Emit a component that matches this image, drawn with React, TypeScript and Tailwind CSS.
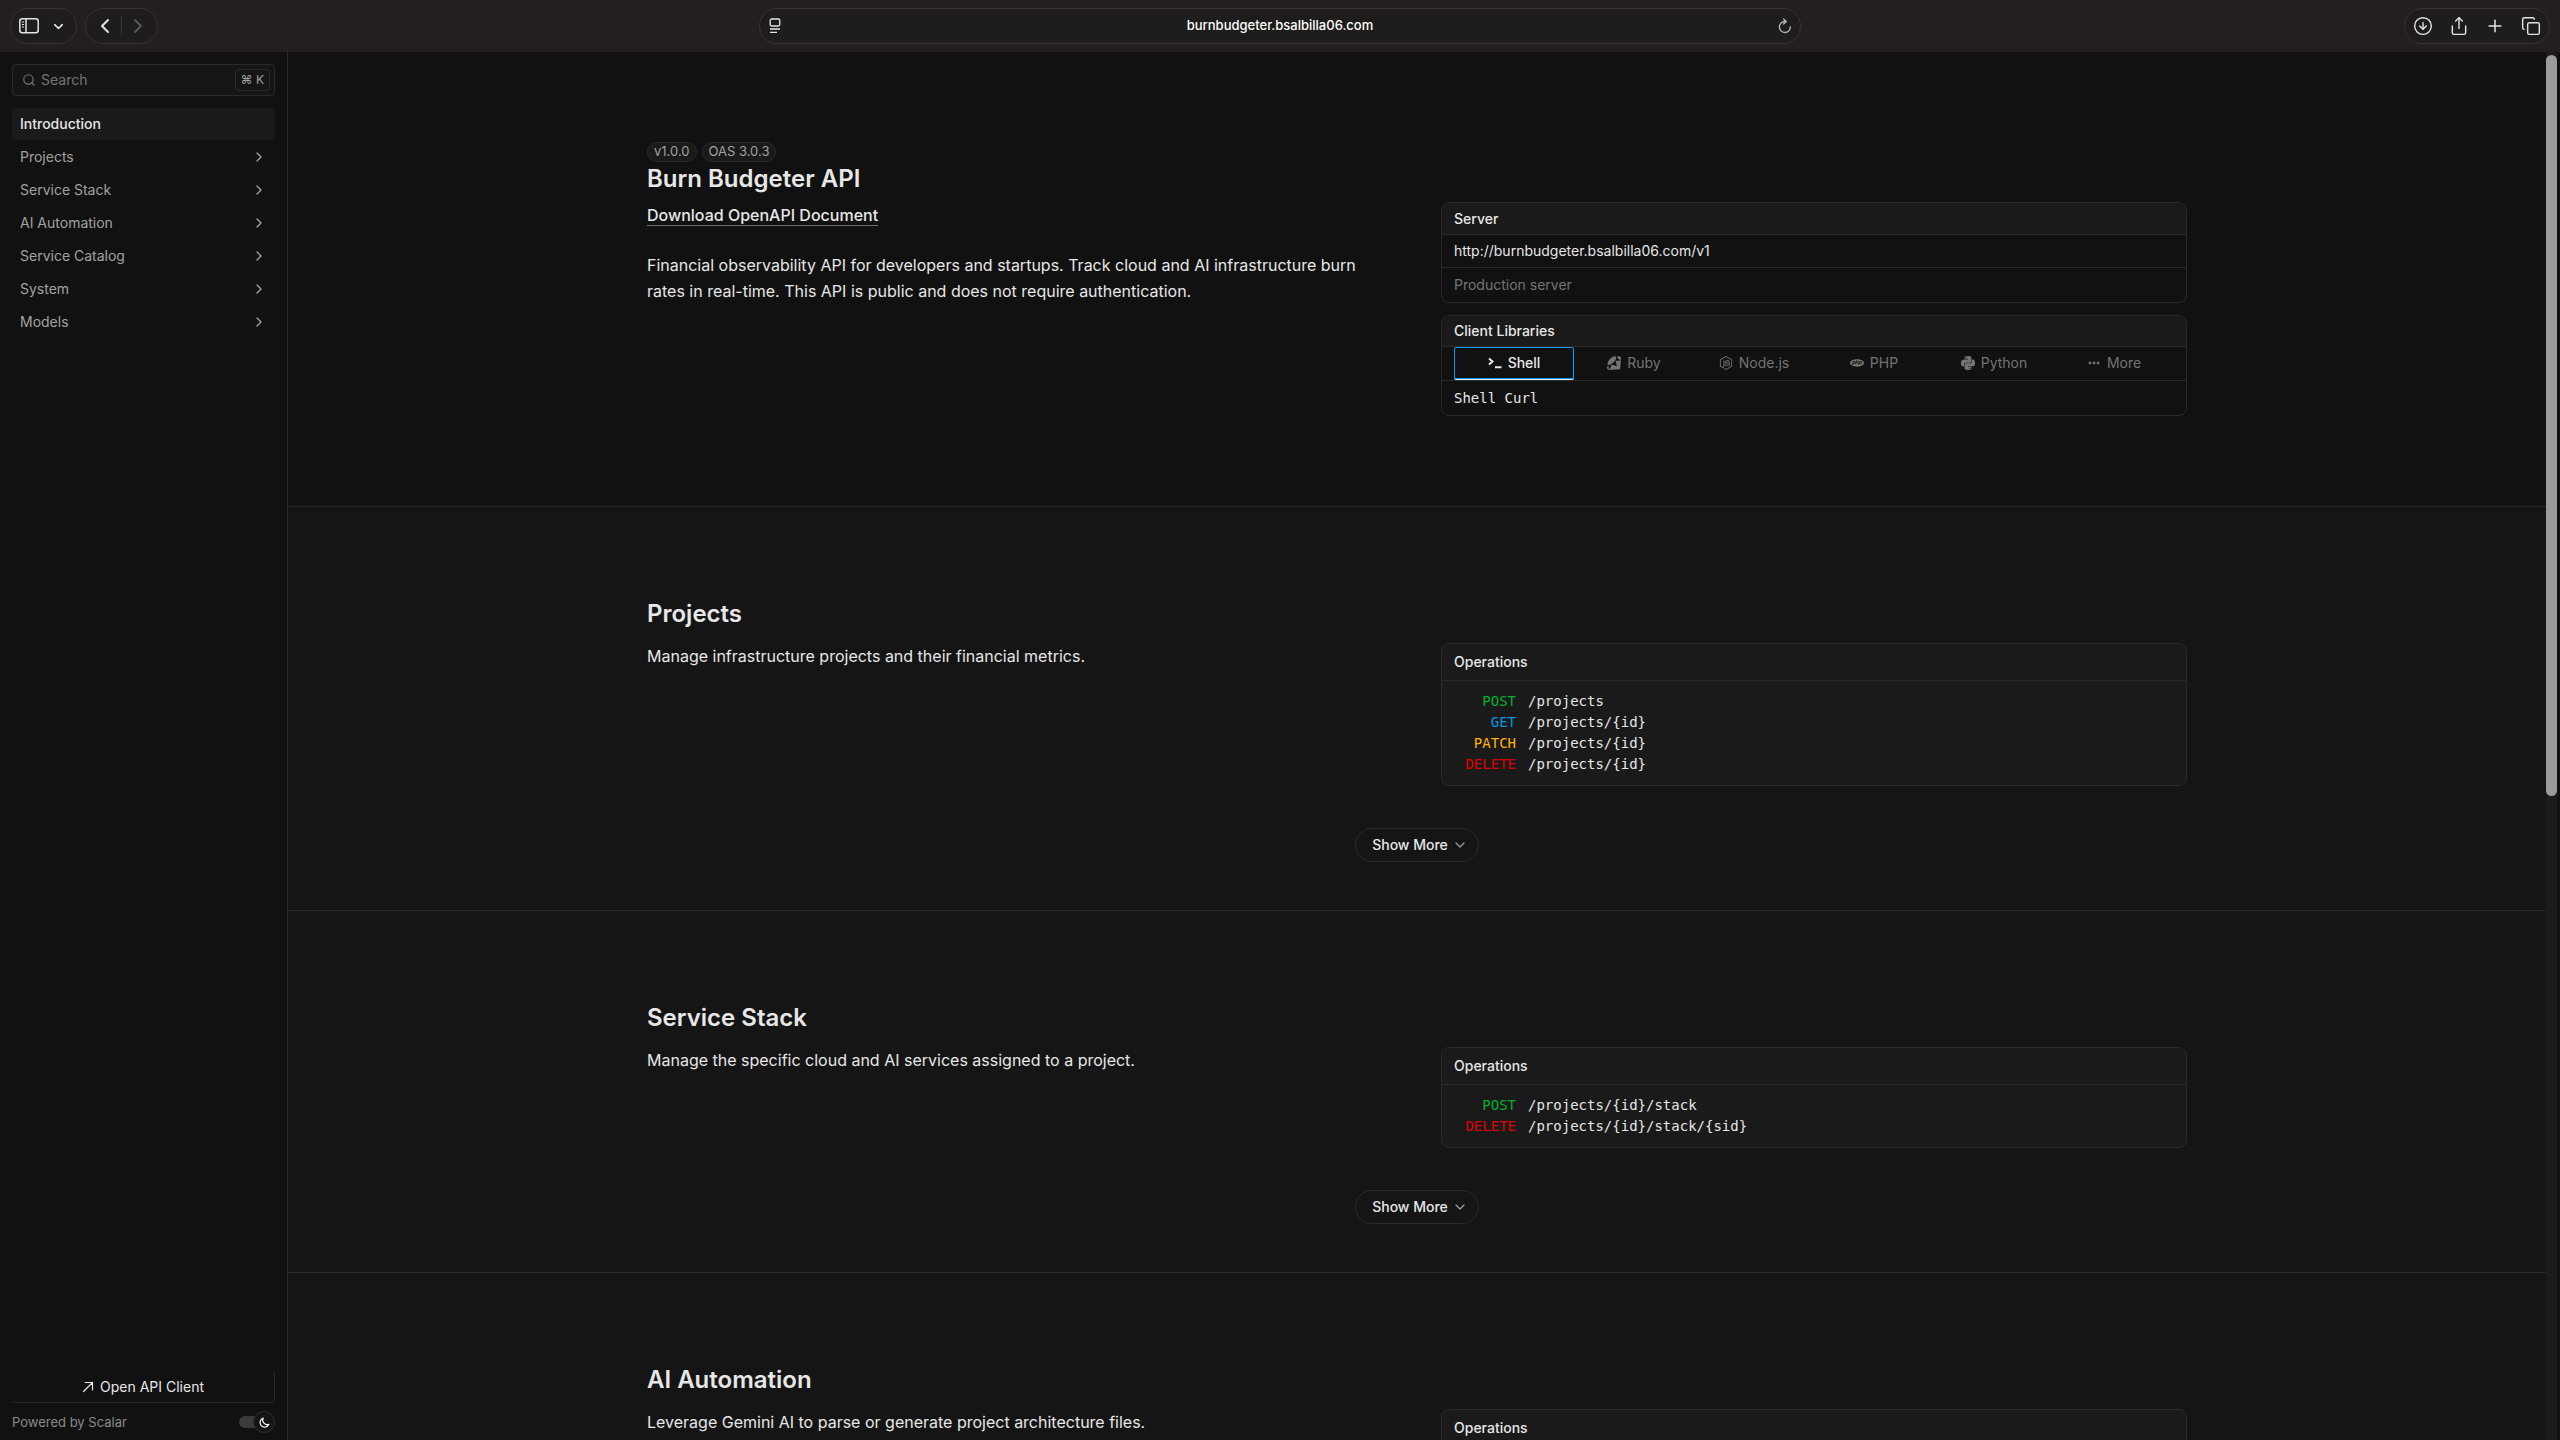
import React from 'react';
import {
  ChevronDown,
  ChevronLeft,
  ChevronRight,
  CircleArrowDown,
  Copy,
  Ellipsis,
  Plus,
  Search,
  Share,
} from 'lucide-react';
import { SiPhp, SiPython, SiRuby } from 'react-icons/si';
import { FaNodeJs } from 'react-icons/fa';

const navItems = ['Projects', 'Service Stack', 'AI Automation', 'Service Catalog', 'System', 'Models'];

const methodColors: Record<string, string> = {
  POST: 'text-[#00b02f]',
  GET: 'text-[#0099e0]',
  PATCH: 'text-[#ffb500]',
  DELETE: 'text-[#e00000]',
};

type Operation = { method: string; path: string };

const sections: { title: string; description: string; operations: Operation[] }[] = [
  {
    title: 'Projects',
    description: 'Manage infrastructure projects and their financial metrics.',
    operations: [
      { method: 'POST', path: '/projects' },
      { method: 'GET', path: '/projects/{id}' },
      { method: 'PATCH', path: '/projects/{id}' },
      { method: 'DELETE', path: '/projects/{id}' },
    ],
  },
  {
    title: 'Service Stack',
    description: 'Manage the specific cloud and AI services assigned to a project.',
    operations: [
      { method: 'POST', path: '/projects/{id}/stack' },
      { method: 'DELETE', path: '/projects/{id}/stack/{sid}' },
    ],
  },
  {
    title: 'AI Automation',
    description: 'Leverage Gemini AI to parse or generate project architecture files.',
    operations: [],
  },
];

const SidebarIcon = () => (
  <svg width="20" height="16" viewBox="0 0 20 16" fill="none" stroke="currentColor" strokeWidth="1.5">
    <rect x="0.8" y="0.8" width="18.4" height="14" rx="2.5" />
    <path d="M7 1v14" />
    <path d="M2.8 4h2.2M2.8 6.5h2.2M2.8 9h2.2" strokeWidth="1" />
  </svg>
);

const ReaderIcon = () => (
  <svg width="14" height="16" viewBox="0 0 14 16" fill="none" stroke="currentColor" strokeWidth="1.3">
    <rect x="2.2" y="1" width="9.6" height="7" rx="1.5" />
    <path d="M2 11h10M2 14.3h7" />
  </svg>
);

const ReloadIcon = () => (
  <svg width="14" height="16" viewBox="0 0 14 16" fill="none" stroke="currentColor" strokeWidth="1.4" strokeLinecap="round" strokeLinejoin="round">
    <path d="M7.5 3.5A5.5 5.5 0 1 0 12.4 9" />
    <path d="M5.6 1l2.6 2.5-2.6 2.6" />
  </svg>
);

const ShellIcon = () => (
  <svg width="14" height="14" viewBox="0 0 14 14" fill="none" stroke="currentColor" strokeWidth="2">
    <path d="M1 2.5l3.5 3-3.5 3M7 11.3h6.5" />
  </svg>
);

const ArrowIcon = () => (
  <svg width="12" height="12" viewBox="0 0 12 12" fill="none" stroke="currentColor" strokeWidth="1.2" strokeLinecap="round" strokeLinejoin="round">
    <path d="M1.5 10.5l9-9M3 1.5h7.5V9" />
  </svg>
);

const MoonIcon = () => (
  <svg width="11" height="11" viewBox="0 0 24 24" fill="none" stroke="currentColor" strokeWidth="2.6" strokeLinejoin="round">
    <path d="M9 2.5A10 10 0 1 0 21.5 16 10 10 0 0 1 9 2.5Z" />
  </svg>
);

const languages = [
  { name: 'Ruby', icon: <SiRuby size={14} /> },
  { name: 'Node.js', icon: <FaNodeJs size={14} /> },
  { name: 'PHP', icon: <SiPhp size={14} /> },
  { name: 'Python', icon: <SiPython size={14} /> },
  { name: 'More', icon: <Ellipsis size={14} strokeWidth={3} /> },
];

const Toolbar = () => {
  const pill = 'flex h-9 items-center rounded-full border border-[#383332] bg-[#1e1d1b]';
  return (
    <header className="flex h-13 shrink-0 items-center justify-between bg-[#231f1e] px-2.5 text-[#e4e3e2]">
      <div className="flex flex-1 gap-2">
        <div className={`${pill} gap-2.5 px-2`}>
          <button aria-label="Toggle sidebar"><SidebarIcon /></button>
          <button aria-label="Tab groups" className="px-0.5"><ChevronDown size={15} strokeWidth={2.5} /></button>
        </div>
        <div className={`${pill} px-[7px]`}>
          <button aria-label="Back"><ChevronLeft size={24} /></button>
          <span className="mx-1 h-5 w-px bg-[#383635]" />
          <button aria-label="Forward" className="text-[#5a5857]"><ChevronRight size={24} /></button>
        </div>
      </div>
      <div className={`${pill} w-[1042px] justify-between px-2`}>
        <ReaderIcon />
        <span className="text-[13px] font-medium text-white">burnbudgeter.bsalbilla06.com</span>
        <button aria-label="Reload" className="text-[#b5b4b3]"><ReloadIcon /></button>
      </div>
      <div className="flex flex-1 justify-end">
        <div className={`${pill} gap-4 px-2`}>
          <button aria-label="Downloads"><CircleArrowDown size={20} strokeWidth={1.7} /></button>
          <button aria-label="Share"><Share size={20} strokeWidth={1.7} /></button>
          <button aria-label="New tab"><Plus size={20} strokeWidth={1.8} /></button>
          <button aria-label="Tab overview"><Copy size={20} strokeWidth={1.7} /></button>
        </div>
      </div>
    </header>
  );
};

const Sidebar = () => (
  <aside className="flex w-72 shrink-0 flex-col border-r border-[#2a2a2a] p-3 pb-1.5 text-sm text-[#a1a1a1]">
    <label className="flex h-8 items-center gap-[5px] rounded-sm border border-[#2a2a2a] bg-[#151515] pr-1 pl-[9px] text-[#747474]">
      <Search size={14} strokeWidth={2} />
      <input aria-label="Search" placeholder="Search" className="w-0 flex-1 outline-none placeholder:text-[#747474]" />
      <kbd className="flex h-[22px] items-center rounded-sm border border-[#2a2a2a] px-[5px] font-['Inter',sans-serif] text-xs text-[#a1a1a1]">⌘ K</kbd>
    </label>
    <nav className="mt-3 flex flex-col gap-px">
      <a href="#introduction" className="flex h-8 items-center rounded-sm bg-[#1a1a1a] px-2 font-medium text-[#e7e7e7]">
        Introduction
      </a>
      {navItems.map((item) => (
        <a key={item} href="#" className="flex h-8 items-center justify-between px-2">
          {item}
          <ChevronRight size={16} strokeWidth={2} />
        </a>
      ))}
    </nav>
    <div className="mt-auto">
      <button className="flex h-8 w-full items-center justify-center gap-1.5 rounded-sm border border-t-0 border-l-0 border-[#2a2a2a] text-[#e7e7e7]">
        <ArrowIcon />
        Open API Client
      </button>
      <div className="mt-[7px] flex h-6 items-center justify-between">
        <a href="#" className="text-[13px] text-[#8b8b8b]">Powered by Scalar</a>
        <button role="switch" aria-checked="true" aria-label="Dark mode" className="flex items-center">
          <span className="-mr-1.5 h-3 w-5 rounded-full bg-[#3a3a3a]" />
          <span className="flex size-[22px] items-center justify-center rounded-full border border-[#2f2f2f] bg-[#151515] text-white">
            <MoonIcon />
          </span>
        </button>
      </div>
    </div>
  </aside>
);

const Introduction = () => (
  <section className="border-b border-[#2a2a2a] bg-[#111111] py-[90px]">
    <div className="mx-auto flex w-full max-w-[1540px] gap-12 text-[#e7e7e7]">
      <div className="flex-1">
        <div className="flex gap-[5px] text-[13px] text-[#a1a1a1]">
          <span className="flex h-5 items-center rounded-full border border-[#2a2a2a] bg-[#1a1a1a] px-1.5">v1.0.0</span>
          <span className="flex h-5 items-center rounded-full border border-[#2a2a2a] bg-[#1a1a1a] px-1.5">OAS 3.0.3</span>
        </div>
        <h1 className="mt-px text-2xl font-semibold">Burn Budgeter API</h1>
        <a href="#" className="mt-2.5 inline-block border-b border-[#6a6a6a] text-base leading-5 font-medium">
          Download OpenAPI Document
        </a>
        <p className="mt-[25px] text-base leading-[26px]">
          Financial observability API for developers and startups. Track cloud and AI infrastructure burn rates in
          real-time. This API is public and does not require authentication.
        </p>
      </div>
      <div className="flex flex-1 flex-col gap-3 pt-[60px] text-sm">
        <div className="overflow-hidden rounded-lg border border-[#2a2a2a]">
          <div className="flex h-8 items-center border-b border-[#2a2a2a] bg-[#1a1a1a] px-3 font-medium">Server</div>
          <div className="flex h-[33px] items-center border-b border-[#2a2a2a] px-3">
            http://burnbudgeter.bsalbilla06.com/v1
          </div>
          <div className="flex h-[34px] items-center px-3 text-[#747474]">Production server</div>
        </div>
        <div className="overflow-hidden rounded-lg border border-[#2a2a2a]">
          <div className="flex h-[31px] items-center border-b border-[#2a2a2a] bg-[#1a1a1a] px-3 font-medium">
            Client Libraries
          </div>
          <div className="grid h-[34px] grid-cols-6 border-b border-[#2a2a2a] px-3 text-[#747474]">
            <button className="flex h-8 items-center justify-center gap-1.5 rounded-xs border border-[#0099ff] font-medium text-[#e7e7e7] shadow-[0_1px_0_#e7e7e7]">
              <ShellIcon />
              Shell
            </button>
            {languages.map((lang) => (
              <button key={lang.name} className="flex h-8 items-center justify-center gap-1.5">
                {lang.icon}
                {lang.name}
              </button>
            ))}
          </div>
          <div className="flex h-[34px] items-center px-3 font-['DejaVu_Sans_Mono',monospace]">Shell Curl</div>
        </div>
      </div>
    </div>
  </section>
);

const Section = ({ title, description, operations }: (typeof sections)[number]) => (
  <section className="border-b border-[#2a2a2a] pt-[91px] pb-12">
    <div className="mx-auto flex w-full max-w-[1540px] gap-12 text-[#e7e7e7]">
      <div className="flex-1">
        <h2 className="text-2xl font-semibold">{title}</h2>
        <p className="mt-[13px] text-base leading-[26px]">{description}</p>
      </div>
      <div className="flex-1 pt-[45px]">
        <div className="rounded-lg border border-[#2a2a2a] bg-[#1a1a1a]">
          <h3 className="flex h-[37px] items-center border-b border-[#2a2a2a] px-3 text-sm font-medium">Operations</h3>
          <ul className="px-3 py-2.5 font-['DejaVu_Sans_Mono',monospace] text-sm leading-[21px]">
            {operations.map((op) => (
              <li key={op.method + op.path}>
                <a href="#" className="flex gap-3">
                  <span className={`w-[62px] text-right ${methodColors[op.method]}`}>{op.method}</span>
                  {op.path}
                </a>
              </li>
            ))}
          </ul>
        </div>
      </div>
    </div>
    {operations.length > 0 && (
      <div className="mt-[42px] flex justify-center">
        <button className="flex h-[34px] items-center gap-1 rounded-full border border-[#2a2a2a] pr-2.5 pl-4 text-sm font-medium text-[#e7e7e7]">
          Show More
          <ChevronDown size={16} strokeWidth={1.8} className="text-[#a1a1a1]" />
        </button>
      </div>
    )}
  </section>
);

const App = () => {
  return (
    <div className="flex h-screen flex-col overflow-hidden bg-[#111111] font-['Inter',sans-serif]">
      <Toolbar />
      <div className="flex min-h-0 flex-1">
        <Sidebar />
        <main className="min-w-0 flex-1 overflow-hidden bg-[#151515]">
          <Introduction />
          {sections.map((section) => (
            <Section key={section.title} {...section} />
          ))}
        </main>
        <div className="w-3.5 shrink-0 pr-[3px]">
          <div className="h-full bg-[#1b1b1b] pt-[3px]">
            <div className="h-[741px] rounded-full bg-[#9b9b9b]" />
          </div>
        </div>
      </div>
    </div>
  );
};

export default App;
